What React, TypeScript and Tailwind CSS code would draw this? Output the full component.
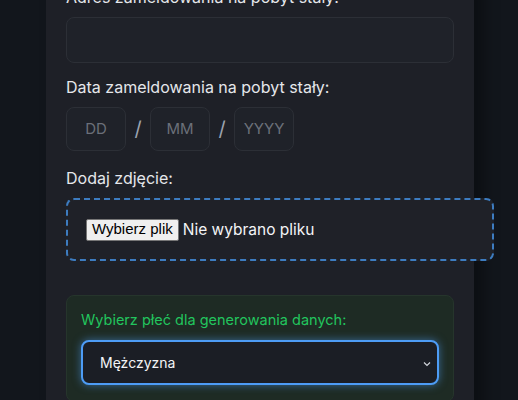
import React from "react";

const font = { fontFamily: "Inter, 'Noto Sans', sans-serif" };

function DateBox({ ph }: { ph: string }) {
  return (
    <div className="w-[60px] h-[44px] rounded-lg border border-[#2c2f36] bg-[#1f2229] flex items-center justify-center text-[15px] text-[#6b7079]">
      {ph}
    </div>
  );
}

export default function App() {
  return (
    <div
      className="relative h-[400px] w-[518px] overflow-hidden bg-[#12161c]"
      style={font}
    >
      <div className="ml-[46px] w-[428px] h-[440px] mt-[-15px] bg-[#1e2027] px-5 shadow-[10px_0_14px_rgba(0,0,0,0.35)]">
        <label className="block text-[16px] leading-6 text-[#e5e7eb] mb-2">
          Adres zameldowania na pobyt stały:
        </label>
        <div className="h-[46px] rounded-lg border border-[#2c2f36] bg-[#1f2229]" />

        <label className="block mt-3 text-[16px] leading-6 text-[#e5e7eb] mb-2">
          Data zameldowania na pobyt stały:
        </label>
        <div className="flex items-center gap-2">
          <DateBox ph="DD" />
          <span className="w-2 text-center text-[20px] text-[#9ca3af]">/</span>
          <DateBox ph="MM" />
          <span className="w-2 text-center text-[20px] text-[#9ca3af]">/</span>
          <DateBox ph="YYYY" />
        </div>

        <label className="block mt-[15px] text-[16px] leading-6 text-[#e5e7eb] mb-2">
          Dodaj zdjęcie:
        </label>
        <div className="box-content w-full p-[18px] border-2 border-dashed border-[#3d7cc0] rounded-lg bg-[#1f2128] flex items-center">
          <span
            className="h-[22px] px-[5px] flex items-center bg-[#efefef] border border-[#767676] rounded-[2px] text-[15px] text-black"
            style={{ fontFamily: "'Liberation Sans', Arial, sans-serif" }}
          >
            Wybierz plik
          </span>
          <span className="ml-1 text-[15.5px] text-[#f3f4f6]">Nie wybrano pliku</span>
        </div>

        <div className="mt-[34px] rounded-lg border border-[#26352c] bg-[#1e2b24] px-[14px] pt-[12px] pb-4">
          <div className="text-[14.5px] leading-6 text-[#22c55e] mb-2">
            Wybierz płeć dla generowania danych:
          </div>
          <div className="relative h-[45px] rounded-lg border-2 border-[#4d9cf5] bg-[#1b1e25] shadow-[0_0_8px_rgba(77,156,245,0.55)] flex items-center pl-[17px] text-[14px] text-[#f3f4f6]">
            Mężczyzna
            <svg
              className="absolute right-[6px] top-[19px]"
              width="8"
              height="6"
              viewBox="0 0 8 6"
              fill="none"
            >
              <path d="M1 1.5L4 4.5L7 1.5" stroke="#d1d5db" strokeWidth="1.2" />
            </svg>
          </div>
        </div>
      </div>
    </div>
  );
}
